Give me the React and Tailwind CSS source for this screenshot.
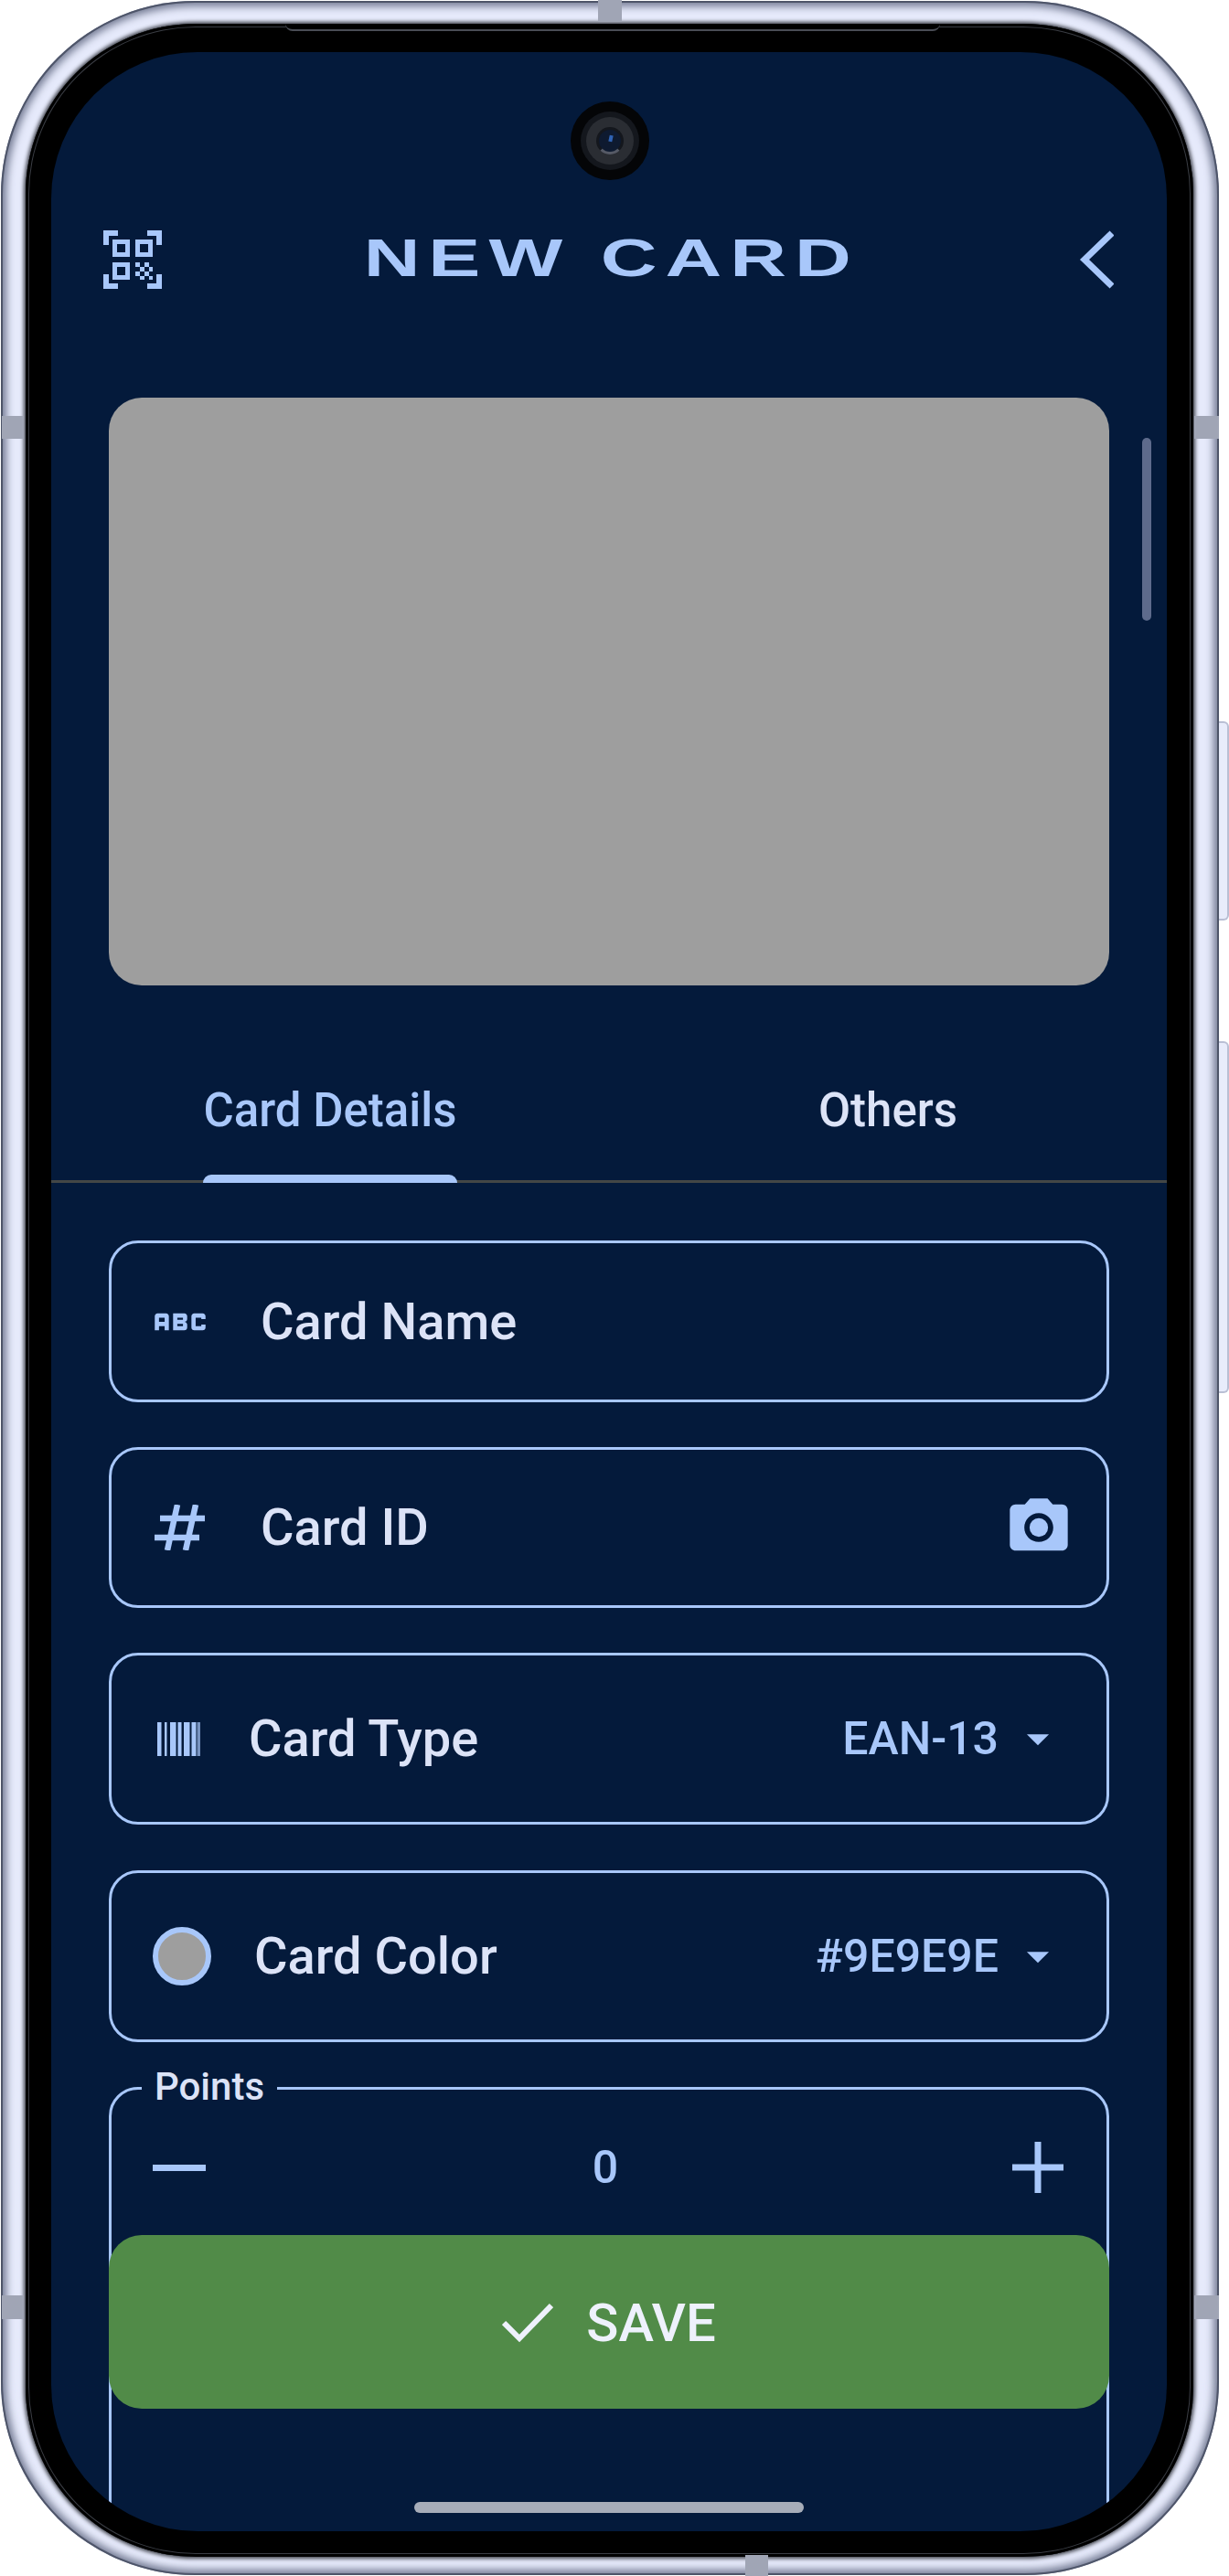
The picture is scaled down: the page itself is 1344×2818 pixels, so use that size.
import React from 'react';
import { MdAbc, MdPhotoCamera, MdArrowDropDown } from 'react-icons/md';

const font = { fontFamily: 'Roboto, sans-serif' };

const QrIcon = () => (
  <svg width="64" height="64" viewBox="0 0 64 64" fill="#a8c7fa">
    {/* corners */}
    <path d="M0 0h16v6H6v10H0zM48 0h16v16h-6V6H48zM0 48h6v10h10v6H0zM58 48h6v16H48v-6h10z" />
    {/* three finder squares */}
    <path fillRule="evenodd" d="M10 10h19v19H10zM15 15v9h9v-9zM35 10h19v19H35zM40 15v9h9v-9zM10 35h19v19H10zM15 40v9h9v-9z" />
    {/* dotted block */}
    <path d="M35 35h5v5h-5zM45 35h5v5h-5zM40 40h5v5h-5zM50 40h4v5h-4zM35 45h5v5h-5zM45 45h5v5h-5zM40 50h5v4h-5zM50 50h4v4h-4z" />
  </svg>
);

const BackIcon = () => (
  <svg width="38" height="64" viewBox="0 0 38 64" fill="none" stroke="#a8c7fa" strokeWidth="7">
    <path d="M36 3 L6 32 L36 61" />
  </svg>
);

const BarcodeIcon = () => (
  <svg width="47" height="37" viewBox="0 0 47 37" fill="#a8c7fa">
    <rect x="0" y="0" width="4.500" height="37" />
    <rect x="8" y="0" width="2.500" height="37" />
    <rect x="14" y="0" width="6.500" height="37" />
    <rect x="22.500" y="0" width="4" height="37" />
    <rect x="29" y="0" width="6.500" height="37" />
    <rect x="37.500" y="0" width="5" height="37" />
    <rect x="43.500" y="0" width="3.500" height="37" opacity="0.7" />
  </svg>
);

const HashIcon = () => (
  <svg width="55" height="50" viewBox="0 0 55 50" fill="none" stroke="#a8c7fa" strokeWidth="6.500">
    <path d="M6 15H55M0 36H49M25 0L14 50M45 0L34 50" />
  </svg>
);

const CheckIcon = () => (
  <svg width="56" height="44" viewBox="0 0 56 44" fill="none" stroke="#eef1fc" strokeWidth="6">
    <path d="M2 22L19 39L54 3" />
  </svg>
);

const Field = ({ className, children }) => (
  <div className={`flex items-center rounded-[32px] border-[3px] border-[#a8c7fa] ${className}`}>
    {children}
  </div>
);

const Label = ({ children, className }) => (
  <span className={`text-[56px] font-medium leading-none text-[#dce3f7] ${className}`}>{children}</span>
);

const Dropdown = ({ value }) => (
  <div className="ml-auto flex items-center">
    <span className="text-[50px] font-medium leading-none text-[#a8c7fa]">{value}</span>
    <MdArrowDropDown className="ml-[14px] text-[#a8c7fa]" size={58} />
  </div>
);

export default function App() {
  return (
    <div className="relative h-[2818px] w-[1344px] overflow-hidden bg-white" style={font}>
      {/* side buttons */}
      <div className="absolute right-0 top-[789px] h-[218px] w-[14px] rounded-r-[6px] border-2 border-l-[3px] border-[#b9bfd4] border-l-[#565d72] bg-[#e8ecfb]" />
      <div className="absolute right-0 top-[1139px] h-[385px] w-[14px] rounded-r-[6px] border-2 border-l-[3px] border-[#b9bfd4] border-l-[#565d72] bg-[#e8ecfb]" />

      {/* phone body */}
      <div className="relative ml-px mt-px h-[2816px] w-[1332px] rounded-[212px] bg-[#e6eafb] pb-[20px] pl-[27px] pr-[28px] pt-[25px] shadow-[inset_0_0_0_2px_#4e5569,inset_0_0_9px_6px_#757c94]">
        <div className="h-full w-full rounded-[186px] bg-black px-[28px] pb-[27px] pt-[31px] shadow-[0_0_4px_2px_#3c3f48,inset_0_0_0_3px_#000,inset_0_0_0_4px_#3a3d44]">
          <div className="relative h-[2712px] w-[1220px] overflow-hidden rounded-[160px] bg-[#041a3b]">
            {/* header */}
            <div className="flex items-center justify-between pl-[57px] pr-[58px] pt-[195px]">
              <QrIcon />
              <BackIcon />
            </div>
            <div className="absolute left-0 right-0 top-[185px] flex justify-center pl-[6px]">
              <span className="origin-center scale-x-[1.5] text-[57px] font-bold leading-[80px] tracking-[6px] text-[#a8c7fa]" style={{ fontFamily: '"Liberation Sans", sans-serif' }}>
                NEW CARD
              </span>
            </div>

            {/* card preview */}
            <div className="mx-[63px] mt-[119px] h-[643px] rounded-[36px] bg-[#9e9e9e]" />

            {/* tabs */}
            <div className="grid h-[216px] grid-cols-2 border-b-[3px] border-[#444746] text-[51px] font-medium">
              <div className="flex justify-center">
                <div className="-mb-[3px] flex w-[278px] flex-col items-center pt-[112px]">
                  <span className="whitespace-nowrap leading-[50px] text-[#a8c7fa]">Card Details</span>
                  <div className="mt-auto h-[9px] w-full rounded-t-[9px] bg-[#a8c7fa]" />
                </div>
              </div>
              <div className="flex justify-center pt-[112px]">
                <span className="leading-[50px] text-[#dce3f7]">Others</span>
              </div>
            </div>

            {/* form */}
            <div className="mx-[63px] mt-[63px] flex flex-col">
              <Field className="h-[177px] pl-[38px]">
                <MdAbc className="text-[#a8c7fa]" size={74} />
                <Label className="ml-[51px]">Card Name</Label>
              </Field>
              <Field className="mt-[49px] h-[176px] pl-[47px] pr-[36px]">
                <HashIcon />
                <Label className="ml-[61px]">Card ID</Label>
                <MdPhotoCamera className="ml-auto text-[#a8c7fa]" size={76} />
              </Field>
              <Field className="mt-[49px] h-[188px] pl-[50px] pr-[46px]">
                <BarcodeIcon />
                <Label className="ml-[53px]">Card Type</Label>
                <Dropdown value="EAN-13" />
              </Field>
              <Field className="mt-[50px] h-[188px] pl-[45px] pr-[46px]">
                <div className="h-[64px] w-[64px] rounded-full border-[6px] border-[#a8c7fa] bg-[#9e9e9e]" />
                <Label className="ml-[47px]">Card Color</Label>
                <Dropdown value="#9E9E9E" />
              </Field>
              <div className="relative mt-[49px] h-[700px] rounded-[32px] border-[3px] border-[#a8c7fa]">
                <span className="absolute left-[33px] top-[-26px] bg-[#041a3b] px-[14px] text-[42px] font-medium leading-[46px] text-[#dce3f7]">Points</span>
                <div className="flex h-[170px] items-center justify-between pl-[45px] pr-[47px]">
                  <div className="h-[7px] w-[58px] bg-[#a8c7fa]" />
                  <span className="mr-[8px] text-[50px] font-medium leading-none text-[#a8c7fa]">0</span>
                  <svg width="56" height="56" viewBox="0 0 56 56" fill="#a8c7fa">
                    <path d="M24.500 0h7v24.500h24.500v7H31.500V56h-7V31.500H0v-7h24.500z" />
                  </svg>
                </div>
              </div>
            </div>

            {/* save button sits over the form */}
            <div className="absolute bottom-[134px] left-[63px] right-[63px] flex h-[190px] items-center justify-center rounded-[36px] bg-[#518b48] pt-[2px] text-[#eef1fc]">
              <CheckIcon />
              <span className="ml-[36px] text-[58px] font-medium leading-none">SAVE</span>
            </div>

            {/* scrollbar */}
            <div className="absolute right-[17px] top-[422px] h-[200px] w-[10px] rounded-full bg-[#5e6b8c]" />

            {/* punch-hole camera */}
            <div className="absolute left-[568px] top-[54px] flex h-[86px] w-[86px] items-center justify-center rounded-full bg-[#040507]">
              <div className="flex h-[64px] w-[64px] items-center justify-center rounded-full bg-[#14171d]">
                <div className="flex h-[52px] w-[52px] items-center justify-center rounded-full bg-[#2a2d33]">
                  <div className="relative h-[30px] w-[30px] rounded-full border-[3px] border-[#14171d] border-b-[#565a66] bg-[#0e1a30]">
                    <div className="absolute left-[11px] top-[6px] h-[7px] w-[4px] rotate-12 bg-[#2f63b5]" />
                  </div>
                </div>
              </div>
            </div>

            {/* gesture bar */}
            <div className="absolute bottom-[20px] left-[397px] h-[12px] w-[426px] rounded-full bg-[#a7adb9]" />
          </div>
        </div>
      </div>

      {/* earpiece slot */}
      <div className="absolute left-[312px] top-[26px] h-[8px] w-[716px] rounded-b-[8px] border-b-2 border-[#4a4d55] bg-black" />

      {/* antenna bands */}
      <div className="absolute left-[654px] top-0 h-[24px] w-[26px] bg-[#a0a5b5]" />
      <div className="absolute left-[815px] top-[2795px] h-[23px] w-[25px] bg-[#a0a5b5]" />
      <div className="absolute left-[2px] top-[455px] h-[25px] w-[24px] bg-[#a0a5b5]" />
      <div className="absolute left-[1306px] top-[455px] h-[25px] w-[27px] bg-[#a0a5b5]" />
      <div className="absolute left-[2px] top-[2511px] h-[26px] w-[24px] bg-[#a0a5b5]" />
      <div className="absolute left-[1306px] top-[2511px] h-[26px] w-[27px] bg-[#a0a5b5]" />
    </div>
  );
}
